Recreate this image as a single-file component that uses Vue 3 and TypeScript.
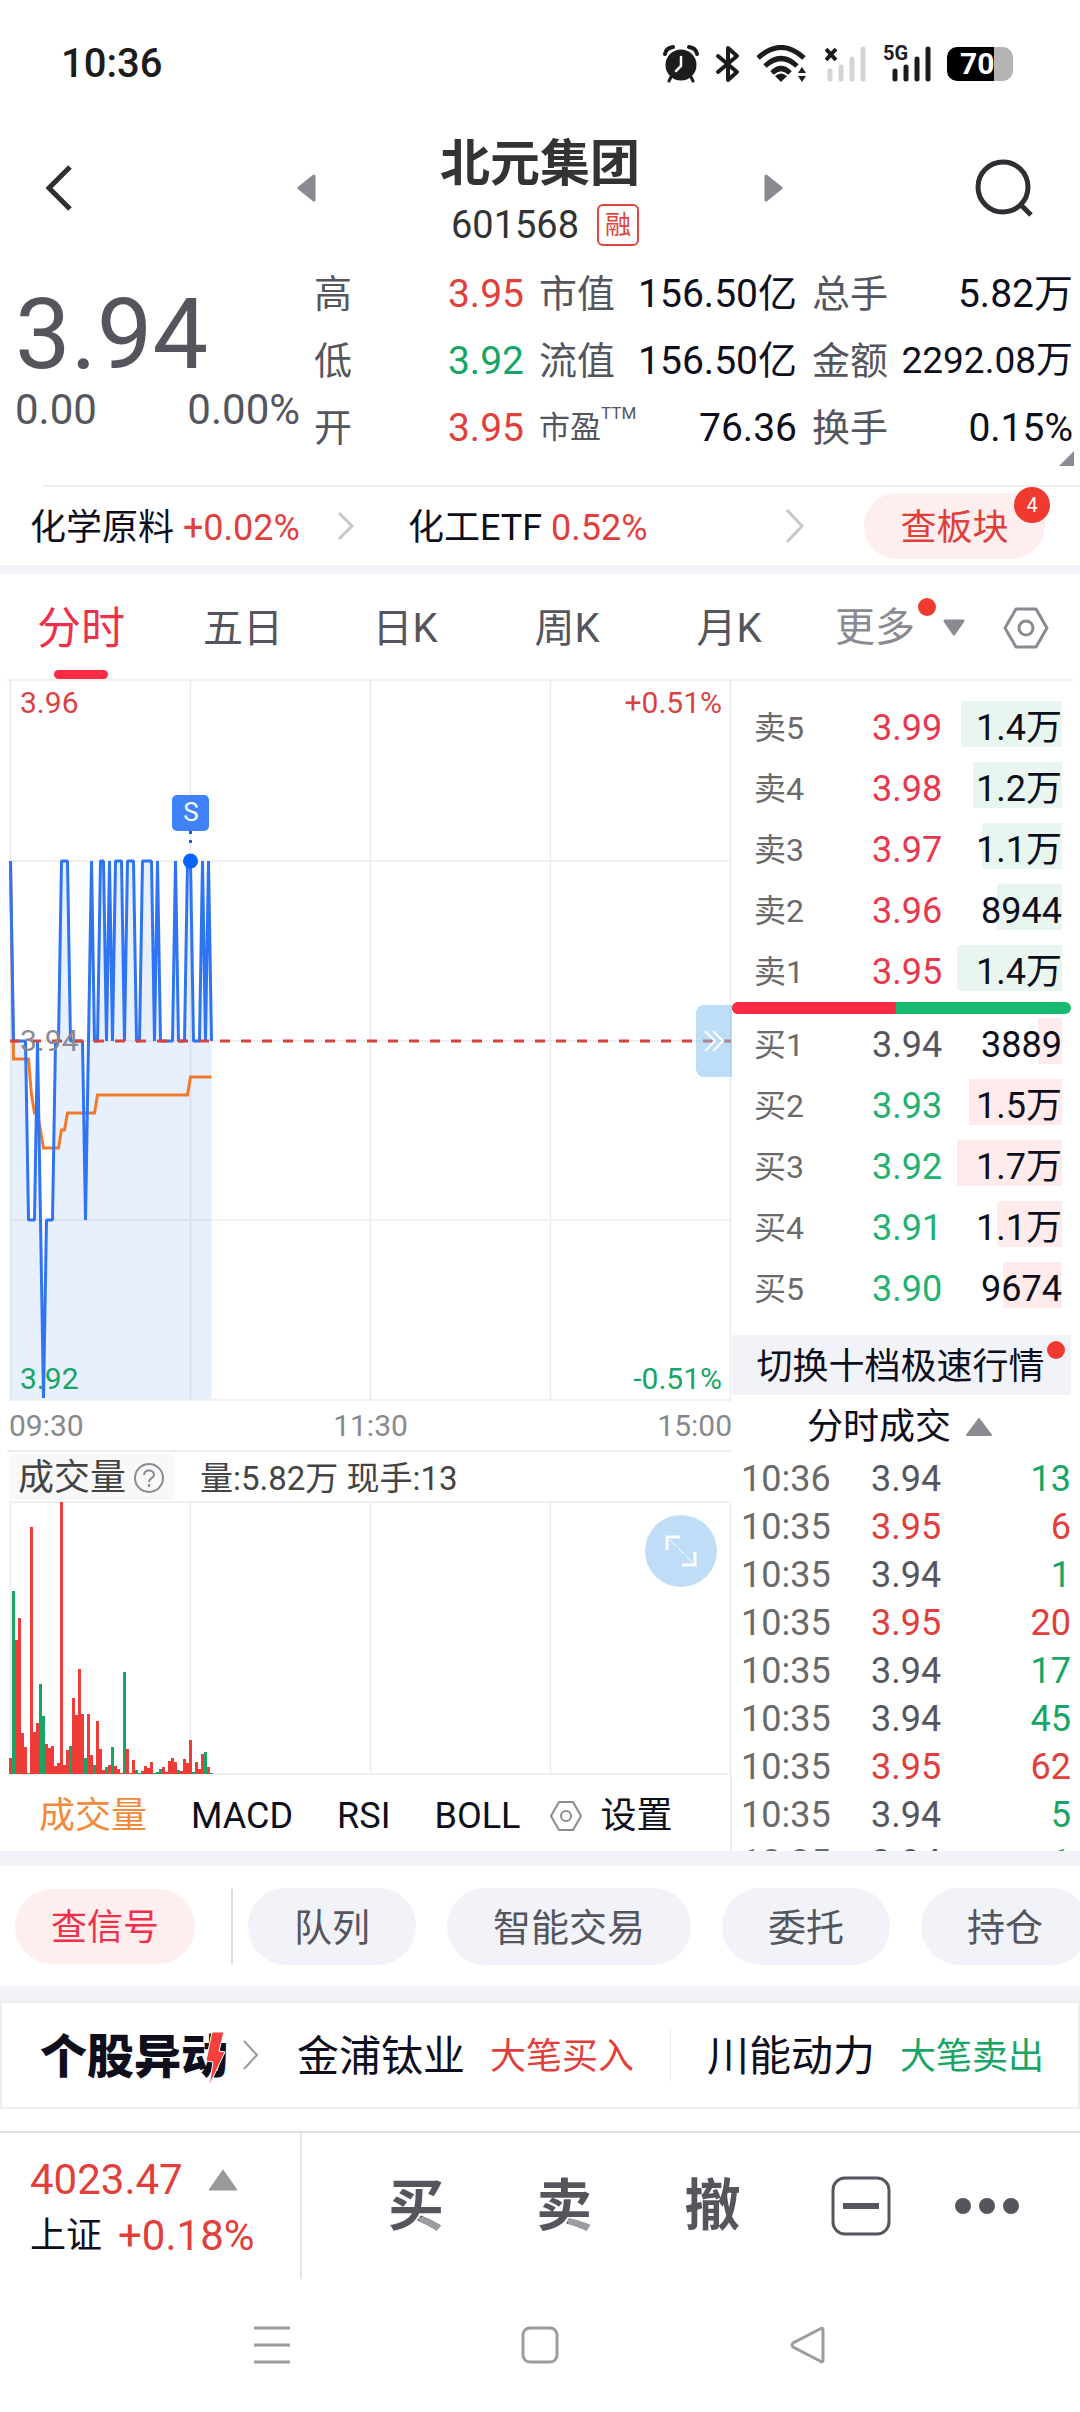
<script setup lang="ts">
import { ref } from 'vue'

type Tone = 'up' | 'down' | 'flat' | 'ink'

interface Stat {
  label: string
  value: string
  tone: Tone
  sup?: string
  tight?: boolean
}

const stats: Stat[] = [
  { label: '高', value: '3.95', tone: 'up' },
  { label: '市值', value: '156.50亿', tone: 'ink' },
  { label: '总手', value: '5.82万', tone: 'ink' },
  { label: '低', value: '3.92', tone: 'down' },
  { label: '流值', value: '156.50亿', tone: 'ink' },
  { label: '金额', value: '2292.08万', tone: 'ink', tight: true },
  { label: '开', value: '3.95', tone: 'up' },
  { label: '市盈', value: '76.36', tone: 'ink', sup: 'TTM' },
  { label: '换手', value: '0.15%', tone: 'ink' },
]

const periods = ['分时', '五日', '日K', '周K', '月K']
const period = ref('分时')

interface Level {
  label: string
  price: string
  volume: string
  depth: number
}

const asks: Level[] = [
  { label: '卖5', price: '3.99', volume: '1.4万', depth: 96 },
  { label: '卖4', price: '3.98', volume: '1.2万', depth: 85 },
  { label: '卖3', price: '3.97', volume: '1.1万', depth: 76 },
  { label: '卖2', price: '3.96', volume: '8944', depth: 62 },
  { label: '卖1', price: '3.95', volume: '1.4万', depth: 100 },
]
const bids: Level[] = [
  { label: '买1', price: '3.94', volume: '3889', depth: 23 },
  { label: '买2', price: '3.93', volume: '1.5万', depth: 89 },
  { label: '买3', price: '3.92', volume: '1.7万', depth: 100 },
  { label: '买4', price: '3.91', volume: '1.1万', depth: 62 },
  { label: '买5', price: '3.90', volume: '9674', depth: 56 },
]

interface Trade {
  time: string
  price: string
  volume: number
  side: 'up' | 'down'
}

const trades: Trade[] = [
  { time: '10:36', price: '3.94', volume: 13, side: 'down' },
  { time: '10:35', price: '3.95', volume: 6, side: 'up' },
  { time: '10:35', price: '3.94', volume: 1, side: 'down' },
  { time: '10:35', price: '3.95', volume: 20, side: 'up' },
  { time: '10:35', price: '3.94', volume: 17, side: 'down' },
  { time: '10:35', price: '3.94', volume: 45, side: 'down' },
  { time: '10:35', price: '3.95', volume: 62, side: 'up' },
  { time: '10:35', price: '3.94', volume: 5, side: 'down' },
  { time: '10:35', price: '3.94', volume: 1, side: 'down' },
]

// One letter per minute: H 3.95, M 3.94, L 3.93, B 3.92.
const minutes = 'HMMMMMLLLMLBLLLMMHHHMMMMMLMHMMHHMHMHHHMHHHMMHHHHMHMMMMMHMMMHHMMMHMHM'
const levelY: Record<string, number> = { H: 180, M: 360, L: 539, B: 717 }
const minuteX = (i: number): number => 10.5 + i * 3

const pricePoints = minutes
  .split('')
  .map((c, i) => `${minuteX(i)},${levelY[c]}`)
  .join(' ')
const areaPoints = `${minuteX(0)},718 ${pricePoints} ${minuteX(minutes.length - 1)},718`

// [minute, y] corners of the average price line.
const averageKnots: [number, number][] = [
  [0, 180], [1, 378], [6, 378], [7, 414], [8, 432], [9, 432], [11, 467], [16, 467],
  [17, 449], [18, 449], [19, 432], [28, 432], [29, 414], [59, 414], [60, 396], [67, 396],
]
const averagePoints = averageKnots.map(([i, y]) => `${minuteX(i)},${y}`).join(' ')

// Bar heights per minute; a negative value is a falling minute.
const volumes: number[] = [
  16, -183, 134, 156, 41, 27, -1, 247, 42, 51, -90, -58, 30, 26, 28, 8, 11, 272, 9, 24, -28, 76, 59,
  105, 60, -16, 60, 19, -9, 53, 25, 4, -7, 9, -27, 8, 5, 1, -102, 25, 1, 14, -4, -1, 3, 8, 6, 12, -1,
  -2, -5, 7, 2, 13, 16, 12, -4, 3, 15, 11, 34, -2, 12, 5, 20, -22, 7, -1,
]

const indicators = ['MACD', 'RSI', 'BOLL']
const shortcuts = ['队列', '智能交易', '委托', '持仓']
const movers = [
  { name: '金浦钛业', event: '大笔买入', tone: 'up' },
  { name: '川能动力', event: '大笔卖出', tone: 'down' },
]
const orders = ['买', '卖', '撤']
</script>

<template>
  <div class="screen">
    <div class="status">
      <span class="clock">10:36</span>
      <div class="status-icons">
        <svg width="36" height="38" viewBox="0 0 36 38">
          <circle cx="18" cy="20" r="15.500" fill="#1c1c1c" />
          <path d="M2 9 Q3 3 10 2 M34 9 Q33 3 26 2" fill="none" stroke="#1c1c1c" stroke-width="4" stroke-linecap="round" />
          <path d="M8 32 L6 36 M28 32 L30 36" stroke="#1c1c1c" stroke-width="3" stroke-linecap="round" />
          <path d="M18 12 V21 L13 26" fill="none" stroke="#fff" stroke-width="2.500" stroke-linecap="round" />
        </svg>
        <svg width="26" height="38" viewBox="0 0 26 38">
          <path d="M3 11 L22 27 L13 35 V3 L22 11 L3 27" fill="none" stroke="#1c1c1c" stroke-width="4" stroke-linejoin="round" stroke-linecap="round" />
        </svg>
        <svg width="52" height="38" viewBox="0 0 52 38">
          <g fill="none" stroke="#1c1c1c" stroke-width="5">
            <path d="M1 13 Q24 -8 47 13" />
            <path d="M8 21 Q24 6 40 21" />
            <path d="M15 28 Q24 19 33 28" />
          </g>
          <path d="M18 31 Q24 26 30 31 L24 37 Z" fill="#1c1c1c" />
          <path d="M41 28 L45 22 L49 28 Z M41 31 L45 37 L49 31 Z" fill="#1c1c1c" />
        </svg>
        <svg width="42" height="38" viewBox="0 0 42 38">
          <path d="M1 4 L11 15 M11 4 L1 15" stroke="#1c1c1c" stroke-width="4" />
          <g stroke="#d4d4d4" stroke-width="5" stroke-linecap="round">
            <path d="M5 26 V34" /><path d="M16 22 V34" /><path d="M27 14 V34" /><path d="M38 4 V34" />
          </g>
        </svg>
        <svg class="cell" width="48" height="38" viewBox="0 0 48 38">
          <text x="0" y="15" class="net">5G</text>
          <g stroke="#1c1c1c" stroke-width="5" stroke-linecap="round">
            <path d="M12 26 V34" /><path d="M23 22 V34" /><path d="M34 14 V34" /><path d="M45 4 V34" />
          </g>
        </svg>
        <span class="battery"><span class="battery-level">70</span></span>
      </div>
    </div>

    <header class="header">
      <div class="side side-left">
        <button class="icon-button" aria-label="返回">
          <svg width="28" height="46" viewBox="0 0 28 46"><path d="M25 2 L4 23 L25 44" fill="none" stroke="#2e2e33" stroke-width="5" /></svg>
        </button>
        <button class="icon-button" aria-label="上一只">
          <svg width="19" height="28" viewBox="0 0 19 28"><path d="M17 2 V26 L2 14 Z" fill="#8a8a92" stroke="#8a8a92" stroke-width="3" stroke-linejoin="round" /></svg>
        </button>
      </div>
      <div class="title">
        <h1>北元集团</h1>
        <div class="code"><span>601568</span><span class="margin-tag">融</span></div>
      </div>
      <div class="side side-right">
        <button class="icon-button" aria-label="下一只">
          <svg width="19" height="28" viewBox="0 0 19 28"><path d="M2 2 V26 L17 14 Z" fill="#8a8a92" stroke="#8a8a92" stroke-width="3" stroke-linejoin="round" /></svg>
        </button>
        <button class="icon-button" aria-label="搜索">
          <svg width="58" height="58" viewBox="0 0 58 58">
            <circle cx="28" cy="28" r="25" fill="none" stroke="#2e2e33" stroke-width="5" />
            <path d="M45 45 L56 56" stroke="#2e2e33" stroke-width="5" />
          </svg>
        </button>
      </div>
    </header>

    <section class="quote">
      <div class="last">
        <div class="last-price">3.94</div>
        <div class="last-change"><span>0.00</span><span>0.00%</span></div>
      </div>
      <dl class="stats">
        <div v-for="s in stats" :key="s.label" class="stat">
          <dt :class="{ small: s.sup }">{{ s.label }}<sup v-if="s.sup">{{ s.sup }}</sup></dt>
          <dd :class="[s.tone, { tight: s.tight }]">{{ s.value }}</dd>
        </div>
      </dl>
      <svg class="corner" width="15" height="15" viewBox="0 0 15 15"><path d="M15 0 V15 H0 Z" fill="#8a8a92" /></svg>
    </section>

    <section class="sectors">
      <a href="#" class="sector">
        <span>化学原料 <b class="up">+0.02%</b></span>
        <svg width="18" height="32" viewBox="0 0 18 32"><path d="M2 3 L15 16 L2 29" fill="none" stroke="#c8c8cc" stroke-width="3" /></svg>
      </a>
      <a href="#" class="sector">
        <span>化工ETF <b class="up">0.52%</b></span>
        <svg width="20" height="36" viewBox="0 0 20 36"><path d="M2 2 L17 18 L2 34" fill="none" stroke="#c8c8cc" stroke-width="3" /></svg>
      </a>
      <button class="sector-pill">查板块<span class="count">4</span></button>
    </section>

    <div class="band thin"></div>

    <nav class="periods">
      <button
        v-for="p in periods"
        :key="p"
        class="period"
        :class="{ active: p === period }"
        @click="period = p"
      >{{ p }}</button>
      <div class="period-extra">
        <button class="more">
          <span class="more-label">更多<i class="dot"></i></span>
          <svg width="24" height="18" viewBox="0 0 24 18"><path d="M3 2 H21 L12 15 Z" fill="#8a8a92" stroke="#8a8a92" stroke-width="3" stroke-linejoin="round" /></svg>
        </button>
        <button class="icon-button" aria-label="图表设置">
          <svg width="46" height="42" viewBox="0 0 46 42" fill="none" stroke="#8a8a92" stroke-width="3">
            <path d="M13 2 H33 L44 21 L33 40 H13 L2 21 Z" stroke-linejoin="round" /><circle cx="23" cy="21" r="7" />
          </svg>
        </button>
      </div>
    </nav>

    <main class="market">
      <div class="charts">
        <div class="chart">
          <svg viewBox="0 0 732 720">
            <g stroke="#ebebed" stroke-width="1.500" fill="none">
              <path d="M10.500 0 V719 M190.500 0 V719 M370.500 0 V719 M550.500 0 V719 M730.500 0 V719" />
              <path d="M10 180 H731 M10 360 H731 M10 539 H731 M10 719 H731" />
            </g>
            <polygon :points="areaPoints" fill="#3078f0" fill-opacity=".11" />
            <polyline :points="averagePoints" fill="none" stroke="#f07a2a" stroke-width="3" />
            <polyline :points="pricePoints" fill="none" stroke="#2f74f2" stroke-width="3" stroke-linejoin="bevel" />
            <path d="M10 360 H731" stroke="#d8433c" stroke-width="3" stroke-dasharray="10 11" />
            <path d="M190.500 142 V166" stroke="#1763e0" stroke-width="3" stroke-dasharray="3 6" stroke-dashoffset="1" />
            <circle cx="190.500" cy="180" r="7.500" fill="#0a62ff" />
            <rect x="172" y="114" width="37" height="36" rx="5" fill="#3f82fc" />
            <text x="191" y="140" class="mark">S</text>
            <text x="20" y="32" class="scale up">3.96</text>
            <text x="20" y="370" class="scale mid">3.94</text>
            <text x="20" y="708" class="scale down">3.92</text>
            <text x="722" y="32" class="scale up end">+0.51%</text>
            <text x="722" y="708" class="scale down end">-0.51%</text>
          </svg>
          <button class="handle" aria-label="收起盘口">
            <svg width="22" height="24" viewBox="0 0 22 24" fill="none" stroke="#fff" stroke-width="2"><path d="M2 2 L12 12 L2 22 M10 2 L20 12 L10 22" /></svg>
          </button>
        </div>
        <div class="axis"><span>09:30</span><span>11:30</span><span>15:00</span></div>
        <div class="volume-head">
          <button class="volume-name">
            成交量
            <svg width="32" height="32" viewBox="0 0 32 32" fill="none" stroke="#8a8a92" stroke-width="2">
              <circle cx="16" cy="16" r="14" /><path d="M11 13 C11 7 21 7 21 13 C21 16 16 16 16 20 M16 22 V25" />
            </svg>
          </button>
          <span class="volume-text">量:5.82万 现手:13</span>
        </div>
        <div class="chart">
          <svg viewBox="0 0 732 274">
            <path d="M10.500 0 V273 M190.500 0 V273 M370.500 0 V273 M550.500 0 V273 M730.500 0 V273 M10 1 H731 M10 273 H731" stroke="#ebebed" stroke-width="1.500" />
            <rect
              v-for="(v, i) in volumes"
              :key="i"
              :x="9 + i * 3"
              :y="273 - Math.abs(v)"
              width="3"
              :height="Math.abs(v)"
              :fill="v > 0 ? '#f03c39' : '#17a566'"
            />
          </svg>
          <button class="expand" aria-label="全屏">
            <svg width="34" height="34" viewBox="0 0 34 34" fill="none" stroke="#fff">
              <path d="M3 16 V3 H16 M31 18 V31 H18" stroke-width="3" /><path d="M6 6 L28 28" stroke-width="1" stroke-dasharray="9 2" />
            </svg>
          </button>
        </div>
        <div class="indicators">
          <button class="indicator current">成交量</button>
          <button v-for="n in indicators" :key="n" class="indicator">{{ n }}</button>
          <button class="indicator settings">
            <svg width="34" height="32" viewBox="0 0 34 32" fill="none" stroke="#8a8a92" stroke-width="2">
              <path d="M10 2 H24 L32 16 L24 30 H10 L2 16 Z" stroke-linejoin="round" /><circle cx="17" cy="16" r="5" />
            </svg>
            设置
          </button>
        </div>
      </div>

      <aside class="book">
        <table class="levels asks">
          <tbody>
            <tr v-for="l in asks" :key="l.label">
              <th scope="row">{{ l.label }}</th>
              <td class="level-price">{{ l.price }}</td>
              <td class="level-volume" :style="{ backgroundSize: l.depth + '% 46px' }">{{ l.volume }}</td>
            </tr>
          </tbody>
        </table>
        <div class="ratio"><i class="ratio-buy" :style="{ width: '48.3%' }"></i></div>
        <table class="levels bids">
          <tbody>
            <tr v-for="l in bids" :key="l.label">
              <th scope="row">{{ l.label }}</th>
              <td class="level-price" :class="{ flat: l.price === '3.94' }">{{ l.price }}</td>
              <td class="level-volume" :style="{ backgroundSize: l.depth + '% 46px' }">{{ l.volume }}</td>
            </tr>
          </tbody>
        </table>
        <button class="switch">切换十档极速行情<i class="dot"></i></button>
        <button class="trades-head">
          分时成交
          <svg width="28" height="20" viewBox="0 0 28 20"><path d="M14 2 L26 18 H2 Z" fill="#8a8a92" stroke="#8a8a92" stroke-width="2" stroke-linejoin="round" /></svg>
        </button>
        <div class="trades">
          <table>
            <tbody>
              <tr v-for="(t, i) in trades" :key="i">
                <td class="trade-time">{{ t.time }}</td>
                <td :class="t.price === '3.95' ? 'up' : 'flat'">{{ t.price }}</td>
                <td class="trade-volume" :class="t.side">{{ t.volume }}</td>
              </tr>
            </tbody>
          </table>
        </div>
      </aside>
    </main>

    <div class="band"></div>

    <section class="shortcuts">
      <button class="shortcut signal">查信号</button>
      <i class="rule"></i>
      <button v-for="s in shortcuts" :key="s" class="shortcut">{{ s }}</button>
    </section>

    <div class="band"></div>

    <section class="movers">
      <a href="#" class="movers-title">
        <span class="logo">
          个股异动
          <svg class="bolt" width="22" height="56" viewBox="0 0 22 56">
            <path d="M8 1 H20 L15 20 L21 21 L5 55 L9 31 L2 30 Z" fill="#f5403d" stroke="#fff" stroke-width="1" />
          </svg>
        </span>
        <svg width="18" height="32" viewBox="0 0 18 32"><path d="M2 2 L15 16 L2 30" fill="none" stroke="#9a9aa0" stroke-width="2" /></svg>
      </a>
      <a v-for="m in movers" :key="m.name" href="#" class="mover">
        <span class="mover-name">{{ m.name }}</span>
        <span :class="m.tone">{{ m.event }}</span>
      </a>
    </section>

    <footer class="dock">
      <a href="#" class="index">
        <span class="index-row">
          <span class="index-value up">4023.47</span>
          <svg width="32" height="22" viewBox="0 0 32 22"><path d="M16 1 L30 21 H2 Z" fill="#999" stroke="#999" stroke-linejoin="round" /></svg>
        </span>
        <span class="index-row"><span>上证</span><span class="index-value up">+0.18%</span></span>
      </a>
      <div class="orders">
        <button v-for="o in orders" :key="o" class="order" :class="{ shaded: o !== '撤' }"><span>{{ o }}</span></button>
        <button class="order" aria-label="持仓">
          <svg width="60" height="60" viewBox="0 0 60 60">
            <rect x="2" y="2" width="56" height="56" rx="12" fill="none" stroke="#55555e" stroke-width="3" />
            <path d="M12 30 H48" stroke="#55555e" stroke-width="6" />
          </svg>
        </button>
        <button class="order" aria-label="更多">
          <svg width="66" height="18" viewBox="0 0 66 18" fill="#55555e"><circle cx="9" cy="9" r="8" /><circle cx="33" cy="9" r="8" /><circle cx="57" cy="9" r="8" /></svg>
        </button>
      </div>
    </footer>

    <nav class="system">
      <button class="icon-button" aria-label="最近任务">
        <svg width="36" height="38" viewBox="0 0 36 38"><path d="M0 2 H36 M0 19 H36 M0 36 H36" stroke="#9c9c9c" stroke-width="3" /></svg>
      </button>
      <button class="icon-button" aria-label="主屏幕">
        <svg width="38" height="38" viewBox="0 0 38 38"><rect x="2" y="2" width="34" height="34" rx="7" fill="none" stroke="#9c9c9c" stroke-width="3" /></svg>
      </button>
      <button class="icon-button" aria-label="后退">
        <svg width="38" height="38" viewBox="0 0 38 38"><path d="M34 4 V34 Q34 37 31 35 L4 21 Q2 19 4 17 L31 3 Q34 1 34 4 Z" fill="none" stroke="#9c9c9c" stroke-width="3" /></svg>
      </button>
    </nav>
  </div>
</template>

<style>
body {
  margin: 0;
  background: #fff;
}
</style>

<style scoped>
.screen {
  font-family: Roboto, "Noto Sans CJK SC", sans-serif;
  font-size: 36px;
  line-height: 48px;
  color: #0e0e1c;
  background: #fff;
  overflow: hidden;
}
svg {
  display: block;
  flex: none;
}
button {
  font: inherit;
  color: inherit;
  background: none;
  border: 0;
  padding: 0;
  cursor: pointer;
  white-space: nowrap;
}
a {
  color: inherit;
  text-decoration: none;
  white-space: nowrap;
}
b,
i {
  font-weight: 400;
  font-style: normal;
}
table {
  border-collapse: collapse;
  width: 100%;
}
td,
th {
  padding: 0;
  font-weight: 400;
  text-align: left;
}
.up { color: #e03f3c; }
.down { color: #17a566; }
.flat { color: #55555e; }
.ink { color: #0e0e1c; }
.icon-button {
  display: flex;
  align-items: center;
  justify-content: center;
}
.band {
  height: 15px;
  background: #f2f3f8;
}
.band.thin { height: 9px; }
.dot {
  position: absolute;
  width: 18px;
  height: 18px;
  border-radius: 50%;
  background: #f03a30;
}

/* status bar */
.status {
  height: 112px;
  padding: 8px 67px 0 61px;
  display: flex;
  align-items: center;
  justify-content: space-between;
}
.clock {
  font-size: 40px;
  font-weight: 500;
  color: #1c1c1c;
}
.status-icons {
  display: flex;
  align-items: center;
  gap: 16px;
}
.cell { overflow: visible; }
.net {
  font-size: 20px;
  font-weight: 700;
  fill: #1c1c1c;
}
.battery {
  width: 66px;
  height: 34px;
  border-radius: 10px;
  background: linear-gradient(90deg, #000 47px, #b4b4b4 47px);
  color: #fff;
}
.battery-level {
  display: block;
  padding-left: 13px;
  font-size: 30px;
  font-weight: 700;
  line-height: 34px;
}

/* header */
.header {
  height: 136px;
  display: grid;
  grid-template-columns: 1fr auto 1fr;
}
.side {
  display: flex;
  align-items: center;
  justify-content: space-between;
}
.side-left { padding-left: 45px; }
.side-right { padding-right: 47px; }
.title {
  align-self: end;
  padding: 0 124px;
  text-align: center;
}
h1 {
  margin: 0;
  font-size: 50px;
  line-height: 60px;
  font-weight: 700;
  color: #333;
  white-space: nowrap;
}
.code {
  height: 62px;
  display: flex;
  align-items: center;
  justify-content: center;
  gap: 18px;
  padding-left: 10px;
  font-size: 38px;
  color: #333;
}
.margin-tag {
  box-sizing: border-box;
  width: 42px;
  height: 42px;
  border: 2px solid #e0443f;
  border-radius: 6px;
  font-size: 26px;
  line-height: 38px;
  color: #e0443f;
}

/* quote */
.quote {
  position: relative;
  display: grid;
  grid-template-columns: 314fr 766fr;
  padding: 4px 0 24px;
}
.last {
  padding: 24px 14px 0 15px;
  color: #55555e;
}
.last-price {
  font-size: 99px;
  line-height: 100px;
}
.last-change {
  display: flex;
  justify-content: space-between;
  font-size: 42px;
  line-height: 52px;
}
.stats {
  margin: 0;
  padding-right: 7px;
  display: grid;
  grid-template-columns: 210fr 258fr 261fr;
  column-gap: 15px;
}
.stat {
  height: 67px;
  display: flex;
  align-items: center;
  justify-content: space-between;
  white-space: nowrap;
}
dt {
  display: flex;
  font-size: 38px;
  color: #55555e;
}
dt.small { font-size: 31px; }
sup {
  font-size: 17px;
  line-height: 18px;
}
dd {
  margin: 0;
  font-size: 39px;
}
dd.tight { font-size: 37px; }
.corner {
  position: absolute;
  right: 6px;
  bottom: 19px;
}

/* sectors */
.sectors {
  position: relative;
  display: grid;
  grid-template-columns: 324fr 396fr auto;
  align-items: center;
  column-gap: 53px;
  height: 78px;
  padding: 0 35px 0 30px;
  border-top: 2px solid #eee;
  border-image: linear-gradient(90deg, #fff 45px, #eee 45px) 2;
}
.sector {
  display: flex;
  align-items: center;
  justify-content: space-between;
}
.sector span { padding-top: 4px; }
.sector-pill {
  position: relative;
  width: 181px;
  height: 66px;
  margin-left: 6px;
  padding-top: 3px;
  border-radius: 33px;
  background: #feeeee;
  color: #e03f3c;
}
.count {
  position: absolute;
  top: -6px;
  right: -5px;
  width: 36px;
  height: 36px;
  border-radius: 50%;
  background: #f03a30;
  color: #fff;
  font-size: 20px;
  line-height: 36px;
}

/* period tabs */
.periods {
  display: grid;
  grid-template-columns: repeat(5, 162fr) 270fr;
  height: 105px;
  border-bottom: 2px solid #eee;
  border-image: linear-gradient(90deg, #fff 9px, #eee 9px calc(100% - 9px), #fff calc(100% - 9px)) 2;
}
.period {
  position: relative;
  padding-top: 5px;
  font-size: 40px;
  color: #55555e;
}
.period.active {
  font-size: 44px;
  color: #f0304a;
}
.period.active::after {
  content: "";
  position: absolute;
  left: 50%;
  bottom: 0;
  width: 54px;
  height: 9px;
  margin-left: -27px;
  border-radius: 5px;
  background: #ff2a44;
}
.period-extra {
  display: flex;
  align-items: center;
  justify-content: space-between;
  padding: 3px 31px 0 25px;
}
.more {
  display: flex;
  align-items: center;
  gap: 27px;
  font-size: 40px;
  color: #8a8a92;
}
.more-label { position: relative; }
.more-label .dot {
  top: -6px;
  right: -21px;
}

/* market: charts and order book */
.market {
  display: grid;
  grid-template-columns: 732fr 348fr;
}
.charts { min-width: 0; }
.chart { position: relative; }
.chart > svg {
  width: 100%;
  height: auto;
}
.scale { font-size: 30px; }
.scale.up { fill: #d9433f; }
.scale.mid { fill: #8a8a92; }
.scale.down { fill: #17a566; }
.end { text-anchor: end; }
.mark {
  font-size: 26px;
  fill: #fff;
  text-anchor: middle;
}
.handle {
  position: absolute;
  right: 0;
  top: 45%;
  width: 36px;
  height: 72px;
  display: flex;
  align-items: center;
  justify-content: center;
  border-radius: 8px 0 0 8px;
  background: rgba(130, 190, 240, .52);
}
.axis {
  display: flex;
  justify-content: space-between;
  height: 49px;
  padding: 0 0 0 9px;
  font-size: 30px;
  line-height: 50px;
  color: #88888e;
  border-bottom: 2px solid #eee;
  border-image: linear-gradient(90deg, #fff 9px, #eee 9px) 2;
}
.volume-head {
  display: flex;
  align-items: center;
  gap: 25px;
  height: 49px;
  padding-left: 9px;
  font-size: 33px;
  color: #444;
}
.volume-text { padding-top: 4px; }
.volume-name {
  display: flex;
  align-items: center;
  gap: 7px;
  height: 46px;
  padding: 2px 10px 0 9px;
  border-radius: 6px;
  background: #f8f8f8;
  font-size: 36px;
}
.expand {
  position: absolute;
  top: 14px;
  right: 15px;
  width: 72px;
  height: 72px;
  display: flex;
  align-items: center;
  justify-content: center;
  border-radius: 50%;
  background: #bfddf7;
}
.indicators {
  display: flex;
  align-items: center;
  height: 70px;
  padding: 6px 0 0 39px;
  border-right: 2px solid #eee;
}
.indicator + .indicator { margin-left: 44px; }
.indicator.settings {
  display: flex;
  align-items: center;
  gap: 17px;
  margin-left: 29px;
}
.indicator.current { color: #f08a3c; }

.book {
  display: flex;
  flex-direction: column;
  padding: 16px 9px 0 0;
}
.levels { table-layout: fixed; }
.levels tr { height: 61px; }
.levels th {
  width: 110px;
  padding-left: 22px;
  font-size: 32px;
  color: #6a6a6a;
}
.level-price { padding-left: 8px; }
.asks .level-price { color: #e8384d; }
.bids .level-price { color: #24b070; }
.bids .level-price.flat { color: #55555e; }
.level-volume {
  width: 105px;
  text-align: right;
  background-repeat: no-repeat;
  background-position: right 4px;
}
.levels tr::after {
  content: "";
  display: table-cell;
  width: 9px;
}
.asks .level-volume { background-image: linear-gradient(#e8f6ef, #e8f6ef); }
.bids .level-volume { background-image: linear-gradient(#ffebeb, #ffebeb); }
.ratio {
  height: 12px;
  border-radius: 6px;
  overflow: hidden;
  background: #17bb70;
}
.ratio-buy {
  display: block;
  height: 100%;
  background: #ff2a44;
}
.switch {
  position: relative;
  height: 60px;
  margin-top: 16px;
  padding: 4px 2px 0 0;
  background: #f2f3f8;
}
.switch .dot {
  top: 6px;
  right: 6px;
}
.trades-head {
  display: flex;
  align-items: center;
  justify-content: center;
  gap: 14px;
  height: 60px;
  padding: 4px 3px 0 0;
}
.trades {
  flex: 1 1 0;
  min-height: 0;
  overflow: hidden;
}
.trades tr { height: 48px; }
.trade-time {
  width: 139px;
  padding-left: 9px;
  box-sizing: border-box;
  color: #6a6a6a;
}
.trade-volume { text-align: right; }

/* shortcuts */
.shortcuts {
  display: flex;
  align-items: center;
  height: 120px;
  padding-left: 15px;
  overflow: hidden;
}
.shortcut {
  flex: none;
  height: 77px;
  margin-right: 31px;
  padding: 4px 46px 0;
  border-radius: 38px;
  background: #f2f3f8;
  font-size: 38px;
  color: #55555e;
}
.shortcut.signal {
  height: 75px;
  margin-right: 36px;
  padding: 3px 36px 0;
  background: #ffeeee;
  font-size: 36px;
  color: #f0304a;
}
.rule {
  flex: none;
  width: 2px;
  height: 75px;
  margin-right: 15px;
  background: #dcdce0;
}

/* movers */
.movers {
  display: flex;
  align-items: center;
  height: 104px;
  padding-left: 38px;
  border: 2px solid #eee;
}
.movers-title {
  display: flex;
  align-items: center;
  gap: 14px;
  margin-right: 37px;
}
.logo {
  position: relative;
  padding-top: 4px;
  font-size: 47px;
  font-weight: 900;
}
.bolt {
  position: absolute;
  top: 2px;
  right: 2px;
}
.mover {
  display: flex;
  align-items: center;
  gap: 25px;
  padding-top: 4px;
}
.mover + .mover {
  margin-left: 36px;
  padding-left: 36px;
  border-left: 1px solid #eee;
}
.mover-name { font-size: 42px; }

/* dock */
.dock {
  display: grid;
  grid-template-columns: 302fr 778fr;
  height: 146px;
  margin-top: 22px;
  border-top: 2px solid #e2e2e2;
}
.index {
  display: flex;
  flex-direction: column;
  justify-content: center;
  gap: 8px;
  padding: 4px 0 0 30px;
  border-right: 2px solid #e6e6e6;
}
.index-row {
  display: flex;
  align-items: center;
  gap: 16px;
}
.index-row:first-child { gap: 24px; }
.index-value { font-size: 42px; }
.orders {
  display: grid;
  grid-template-columns: repeat(4, 148fr) 104fr;
  padding: 0 41px 0 40px;
}
.order {
  display: flex;
  align-items: center;
  justify-content: center;
  font-size: 56px;
  line-height: 60px;
  font-weight: 700;
  color: #55555e;
}
.order.shaded span {
  color: transparent;
  background: linear-gradient(#9c9ca2, #9c9ca2) 100% 100% / 44% 32% no-repeat, #55555e;
  background-clip: text;
  -webkit-background-clip: text;
}

/* system navigation */
.system {
  display: grid;
  grid-template-columns: repeat(3, 1fr);
  height: 132px;
  padding: 0 138px;
}
</style>
